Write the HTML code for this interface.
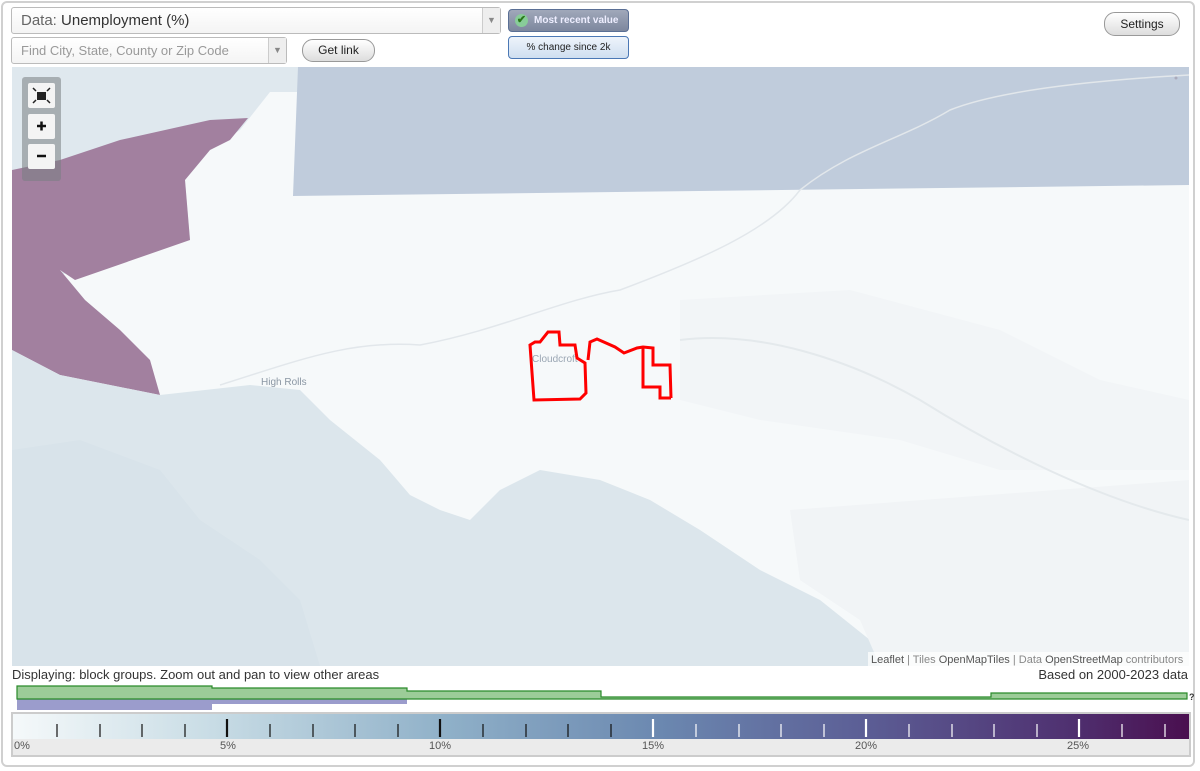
<!DOCTYPE html>
<html><head><meta charset="utf-8"><style>
body{margin:0;width:1200px;height:771px;background:#fff;font-family:"Liberation Sans",sans-serif;position:relative;overflow:hidden}
.frame{position:absolute;left:1px;top:1px;width:1194px;height:766px;border:2px solid #d0d0d0;border-radius:6px;box-sizing:border-box}
.abs{position:absolute}
.sel{border:1px solid #bbb;border-radius:3px;background:linear-gradient(#fff,#f4f4f4);box-sizing:border-box;color:#333}
.arrow{position:absolute;right:0;top:0;bottom:0;width:17px;border-left:1px solid #ccc;background:#eee;color:#888;font-size:9px;text-align:center}
.btn{border:1px solid #999;border-radius:11px;background:linear-gradient(#fff,#ddd);box-sizing:border-box;text-align:center;font-size:12px;color:#222}
</style></head><body>
<div class="frame"></div>
<div class="abs sel" style="left:11px;top:7px;width:490px;height:27px;font-size:15px;line-height:25px;padding-left:9px"><span style="color:#666">Data:</span> Unemployment (%)<div class="arrow" style="line-height:25px">▼</div></div>
<div class="abs sel" style="left:11px;top:37px;width:276px;height:27px;font-size:13px;line-height:25px;padding-left:9px;color:#999">Find City, State, County or Zip Code<div class="arrow" style="line-height:25px">▼</div></div>
<div class="abs btn" style="left:302px;top:39px;width:73px;height:23px;line-height:21px">Get link</div>
<div class="abs" style="left:508px;top:9px;width:121px;height:23px;border:1px solid #5a6f95;border-radius:4px;background:linear-gradient(#a0a8ba,#7d879e);box-sizing:border-box;font-size:10px;font-weight:bold;color:#eef;line-height:21px;padding-left:25px">Most recent value<span style="position:absolute;left:6px;top:4px;width:13px;height:13px;border-radius:7px;background:#8c9;color:#2a7a1a;font-size:11px;line-height:13px;text-align:center">✔</span></div>
<div class="abs" style="left:508px;top:36px;width:121px;height:23px;border:1px solid #4b78b5;border-radius:4px;background:linear-gradient(#eef4fb,#cfdff0);box-sizing:border-box;font-size:10px;color:#222;line-height:21px;text-align:center">% change since 2k</div>
<div class="abs btn" style="left:1104px;top:12px;width:76px;height:24px;line-height:22px">Settings</div>

<svg class="abs" style="left:12px;top:67px" width="1177" height="599" viewBox="12 67 1177 599">
<rect x="12" y="67" width="1177" height="599" fill="#f6f9fa"/>
<polygon points="12,67 298,67 298,92 270,92 240,130 210,150 185,180 190,240 60,275 12,270" fill="#dfe8ee"/>
<polygon points="298,67 1189,67 1189,185 293,196" fill="#c0ccdc"/>
<polygon points="12,170 60,160 120,140 210,120 248,118 230,140 210,150 185,180 190,240 75,280 60,270 12,270" fill="#a2809f"/>
<polygon points="12,270 60,270 85,300 120,330 150,360 160,395 60,375 12,350" fill="#a2809f"/>
<polygon points="12,350 60,375 160,395 250,385 300,390 330,420 380,460 410,495 440,510 470,520 500,490 540,470 600,480 650,500 700,530 760,570 820,600 870,640 880,666 12,666" fill="#dce6ec"/>
<polygon points="12,450 80,440 160,470 200,520 260,560 300,600 320,666 12,666" fill="#d8e3ea"/>
<polygon points="790,510 1189,480 1189,666 880,666 860,620 800,580" fill="#f1f4f6"/>
<polygon points="680,300 850,290 1000,330 1100,380 1189,400 1189,470 1000,470 900,440 760,420 680,400" fill="#f2f5f7"/>
<path d="M1189,75 C1100,80 1000,90 950,110 900,140 850,150 800,190 770,230 700,260 620,290 560,300 500,330 420,345 350,340 300,360 220,385" stroke="#e2e7eb" stroke-width="1.5" fill="none"/>
<path d="M680,340 C760,330 850,360 920,400 1000,450 1100,500 1189,520" stroke="#e4e9ec" stroke-width="2" fill="none"/>
<text x="261" y="385" font-size="10" fill="#8a96a3">High Rolls</text>
<text x="532" y="362" font-size="10" fill="#9aa6b3">Cloudcroft</text>
<polyline points="588,360 590,342 597,339 615,347 624,353 637,348 643,347 653,348 653,365 670,365 671,398" stroke="#f00" stroke-width="3" fill="none"/>
<polygon points="530,345 535,342 540,342 548,332 559,332 560,345 575,345 577,358 585,363 586,393 580,399 534,400" stroke="#f00" stroke-width="3" fill="none"/>
<polyline points="643,347 643,387 660,387 660,398 671,398" stroke="#f00" stroke-width="3" fill="none"/>
<rect x="22" y="77" width="39" height="104" rx="3" fill="rgba(120,125,130,0.55)"/>
<rect x="28" y="83" width="27" height="25" rx="2" fill="#f4f4f4"/>
<rect x="28" y="114" width="27" height="25" rx="2" fill="#f4f4f4"/>
<rect x="28" y="144" width="27" height="25" rx="2" fill="#f4f4f4"/>
<rect x="37" y="92" width="9" height="8" fill="#222"/>
<path d="M33,88 l3,3 M50,88 l-3,3 M33,103 l3,-3 M50,103 l-3,-3" stroke="#222" stroke-width="1.5"/>
<path d="M37,126 h9 M41.5,121.5 v9" stroke="#111" stroke-width="2.5"/>
<path d="M37,156 h9" stroke="#111" stroke-width="2.5"/>
<circle cx="1176" cy="78" r="1.5" fill="#aab"/>
<rect x="868" y="652" width="321" height="14" fill="rgba(255,255,255,0.7)"/>
<text x="871" y="663" font-size="11" fill="#888"><tspan fill="#555">Leaflet</tspan> | Tiles <tspan fill="#555">OpenMapTiles</tspan> | Data <tspan fill="#555">OpenStreetMap</tspan> contributors</text>
</svg>
<div class="abs" style="left:12px;top:667px;font-size:13px;color:#333">Displaying: block groups. Zoom out and pan to view other areas</div>
<div class="abs" style="right:12px;top:667px;font-size:13px;color:#333">Based on 2000-2023 data</div>
<svg class="abs" style="left:0;top:680px" width="1200" height="32">
<polygon points="17,19 212,19 212,30 17,30" fill="#9b9ccc"/>
<polygon points="212,19 407,19 407,24 212,24" fill="#9b9ccc"/>
<rect x="407" y="17" width="780" height="2" fill="#b0b0dd"/>
<path d="M17,19 V6 H212 V8 H407 V11 H601 V17 H991 V13 H1187 V19 Z" fill="#9ccc98" stroke="#2a8a2a" stroke-width="1.2"/>
<text x="1189" y="20" font-size="9" font-weight="bold" fill="#333">?</text>
</svg>
<div class="abs" style="left:11px;top:712px;width:1180px;height:45px;border:2px solid #ccc;box-sizing:border-box;background:#ebebeb">
<div style="position:absolute;left:0;top:0;right:0;height:25px;background:linear-gradient(90deg,#f5f9fa,#c8dce5 17%,#8fb0c8 37%,#6b88b0 55%,#5c5f96 72%,#4f3070 90%,#4a0f4f)"></div>
<div style="position:absolute;top:26px;left:1px;font-size:11px;color:#555">0%</div>
<div style="position:absolute;top:26px;left:207px;font-size:11px;color:#555">5%</div>
<div style="position:absolute;top:26px;left:416px;font-size:11px;color:#555">10%</div>
<div style="position:absolute;top:26px;left:629px;font-size:11px;color:#555">15%</div>
<div style="position:absolute;top:26px;left:842px;font-size:11px;color:#555">20%</div>
<div style="position:absolute;top:26px;left:1054px;font-size:11px;color:#555">25%</div>
</div>
<svg class="abs" style="left:13px;top:714px" width="1176" height="25">
<g stroke-width="1.2">
<path d="M44,10V23 M87,10V23 M129,10V23 M172,10V23 M257,10V23 M300,10V23 M342,10V23 M385,10V23 M470,10V23 M513,10V23 M555,10V23 M598,10V23" stroke="#111"/>
<path d="M683,10V23 M726,10V23 M768,10V23 M811,10V23 M896,10V23 M939,10V23 M981,10V23 M1024,10V23 M1109,10V23 M1152,10V23" stroke="#fff"/>
<path d="M214,5V23 M427,5V23" stroke="#111" stroke-width="2.2"/>
<path d="M640,5V23 M853,5V23 M1066,5V23" stroke="#fff" stroke-width="2.2"/>
</g></svg>
</body></html>
